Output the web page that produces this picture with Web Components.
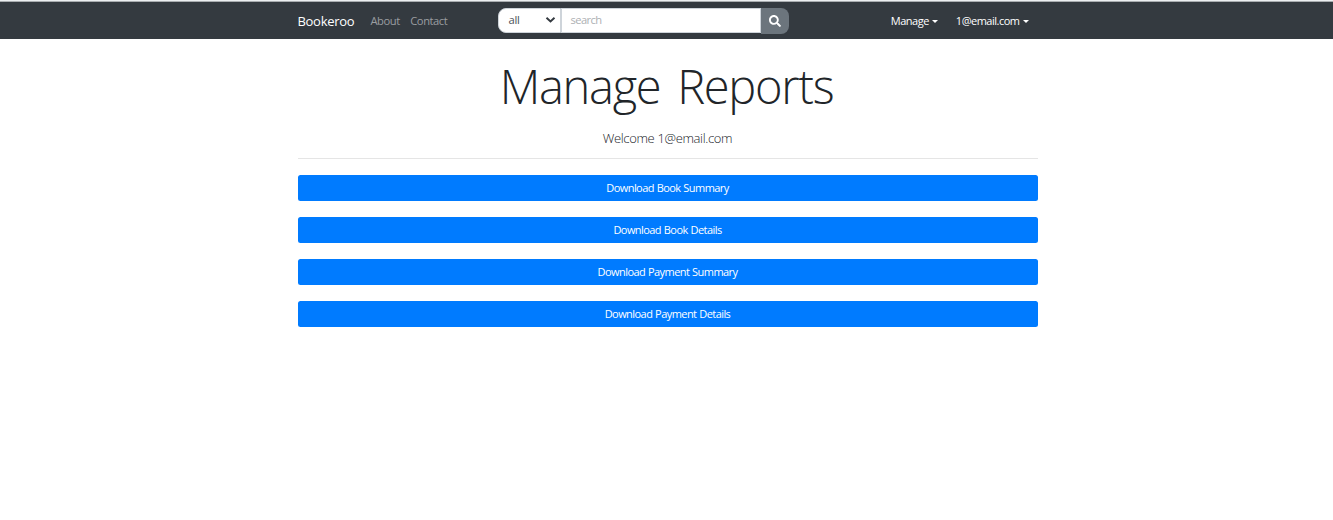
<!DOCTYPE html>
<html lang="en">
<head>
<meta charset="utf-8">
<title>Manage Reports</title>
<style>
body{margin:0;background:#fff;color:#212529;font-family:"Open Sans","Noto Sans",sans-serif;font-size:11.2px;line-height:1.5}
</style>
</head>
<body>
<reports-page></reports-page>
<script>
const define=(name,html)=>customElements.define(name,class extends HTMLElement{
  constructor(){
    super();
    const t=document.createElement('template');
    t.innerHTML=html;
    this.attachShadow({mode:'open'}).append(t.content.cloneNode(true));
  }
});

define('nav-link',`<style>
:host{display:flex;align-items:center;white-space:nowrap;color:#9a9da0;letter-spacing:-.45px}
:host([active]){color:#fff;font-size:11px;letter-spacing:-.5px}
i{display:none;margin-left:3px;margin-bottom:1px;border-top:3.500px solid;border-left:3.500px solid transparent;border-right:3.500px solid transparent}
:host([dropdown]) i{display:block}
</style><slot></slot><i></i>`);

define('search-bar',`<style>
:host{display:flex;height:25px;width:291px}
.select,.input{box-sizing:border-box;background:#fff;border:1px solid #ced4da;display:flex;align-items:center}
.select{width:63px;border-radius:8px 0 0 8px;padding:0 4px 0 10px;justify-content:space-between;color:#495057;letter-spacing:-.3px}
.select span,.input span{padding-top:1px}
.input{width:200px;padding-left:9px;color:#adb0b3;letter-spacing:-.6px}
button{width:28px;height:26px;border:0;padding:0;background:#6c757d;border-radius:0 8px 8px 0;display:flex;align-items:center;justify-content:center}
svg{display:block}
</style>
<div class="select"><span>all</span><svg width="11" height="8" viewBox="0 0 11 8"><path d="M1.500 1.700 5.500 5.500 9.500 1.700" fill="none" stroke="#343a40" stroke-width="1.900"/></svg></div>
<div class="input"><span>search</span></div>
<button aria-label="Search"><svg width="12" height="12" viewBox="0 0 512 512"><path fill="#fff" d="M505 442.7 405.300 343c-4.500-4.500-10.600-7-17-7H372c27.600-35.300 44-79.700 44-128C416 93.100 322.900 0 208 0S0 93.100 0 208s93.100 208 208 208c48.300 0 92.700-16.400 128-44v16.300c0 6.400 2.500 12.500 7 17l99.700 99.700c9.400 9.400 24.600 9.400 33.900 0l28.300-28.300c9.400-9.400 9.400-24.600.1-34zM208 336c-70.700 0-128-57.200-128-128 0-70.700 57.200-128 128-128 70.700 0 128 57.200 128 128 0 70.700-57.200 128-128 128z"/></svg></button>`);

define('top-nav',`<style>
:host{display:block;height:39px;box-sizing:border-box;background:#343a40;border-top:1px solid #eceff1}
.edge{height:1px;background:#a9adb0}
nav{width:740px;margin:0 auto;height:37px;display:grid;grid-template-columns:200px 1fr auto;align-items:center;position:relative;left:1px}
.left,.right{display:flex;align-items:center;padding-top:2px}
.brand{font-size:13px;color:#fff;width:73px;letter-spacing:-.3px}
.left nav-link+nav-link{margin-left:10.500px}
.right{gap:18px;padding-right:9px}
search-bar{margin-bottom:1px}
</style>
<div class="edge"></div>
<nav><div class="left"><span class="brand">Bookeroo</span><nav-link>About</nav-link><nav-link>Contact</nav-link></div>
<search-bar></search-bar>
<div class="right"><nav-link active dropdown>Manage</nav-link><nav-link active dropdown>1@email.com</nav-link></div></nav>`);

define('page-heading',`<style>
:host{display:block;text-align:center;font-weight:300;border-bottom:1px solid #e5e5e5;height:119px}
h1{margin:0;padding:18px 2px 0 0;font-size:47px;line-height:58px;font-weight:300;letter-spacing:-1.300px;word-spacing:6px}
p{margin:13px 0 0;font-size:13px;line-height:20px;letter-spacing:-.35px}
</style><h1><slot name="title"></slot></h1><p><slot></slot></p>`);

define('report-button',`<style>
:host{display:block}
button{display:block;width:100%;height:26px;border:0;border-radius:2.500px;background:#007bff;color:#fff;font:inherit;font-size:11px;padding:0;letter-spacing:-.56px;word-spacing:.5px}
</style><button><slot></slot></button>`);

define('reports-page',`<style>
:host{display:block}
main{width:740px;margin:0 auto;position:relative;left:1px}
.list{display:grid;gap:16px;padding-top:16px}
</style>
<top-nav></top-nav>
<main><page-heading><span slot="title">Manage Reports</span>Welcome 1@email.com</page-heading>
<div class="list"><report-button>Download Book Summary</report-button><report-button>Download Book Details</report-button><report-button>Download Payment Summary</report-button><report-button>Download Payment Details</report-button></div></main>`);
</script>
</body>
</html>
